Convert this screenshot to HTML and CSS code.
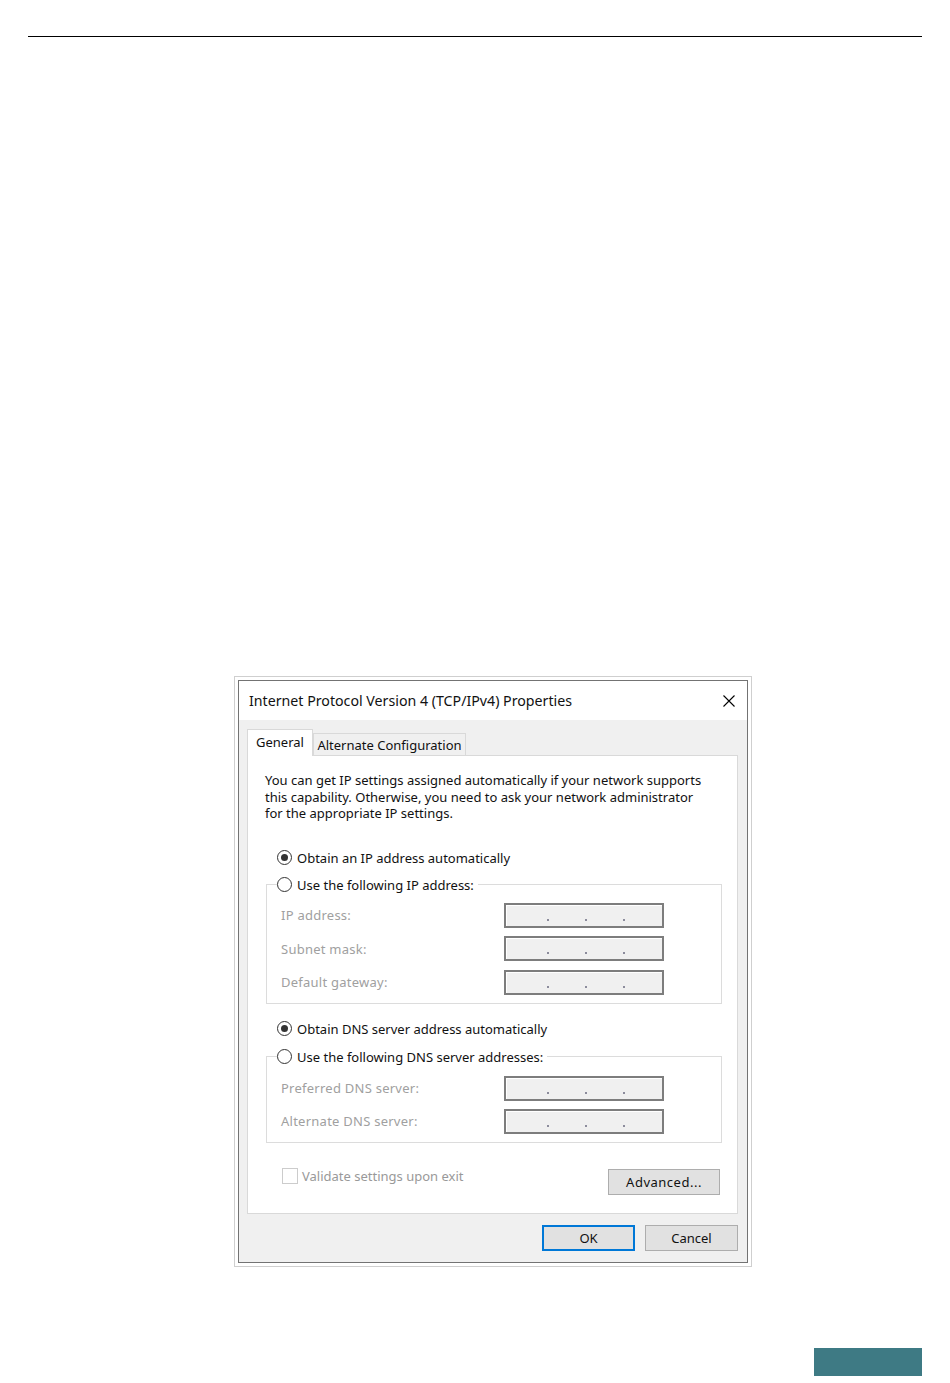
FILE: index.html
```html
<!DOCTYPE html>
<html lang="en">
<head>
<meta charset="utf-8">
<title>TCP/IPv4 Properties</title>
<link rel="stylesheet" href="styles.css">
</head>
<body>
<div class="rule"></div>
<div class="figure">
  <div class="frame">
    <div class="win">
      <div class="titlebar">
        <span class="title">Internet Protocol Version 4 (TCP/IPv4) Properties</span>
        <svg class="close" width="12" height="12" viewBox="0 0 12 12"><path d="M0.5 0.5 L11.5 11.5 M11.5 0.5 L0.5 11.5" stroke="#000" stroke-width="1.1" fill="none"/></svg>
      </div>
      <div class="body">
        <div class="tabs">
          <div class="tab active">General</div>
          <div class="tab">Alternate Configuration</div>
        </div>
        <div class="panel">
          <p class="intro">You can get IP settings assigned automatically if your network supports<br>this capability. Otherwise, you need to ask your network administrator<br>for the appropriate IP settings.</p>
          <div class="opt first"><span class="radio on"></span>Obtain an IP address automatically</div>
          <fieldset class="group">
            <legend class="opt"><span class="radio"></span>Use the following IP address:</legend>
            <div class="row"><span class="lbl">IP address:</span><span class="ipfield"><i></i><i></i><i></i></span></div>
            <div class="row"><span class="lbl">Subnet mask:</span><span class="ipfield"><i></i><i></i><i></i></span></div>
            <div class="row"><span class="lbl">Default gateway:</span><span class="ipfield"><i></i><i></i><i></i></span></div>
          </fieldset>
          <div class="opt second"><span class="radio on"></span>Obtain DNS server address automatically</div>
          <fieldset class="group dns">
            <legend class="opt"><span class="radio"></span>Use the following DNS server addresses:</legend>
            <div class="row"><span class="lbl">Preferred DNS server:</span><span class="ipfield"><i></i><i></i><i></i></span></div>
            <div class="row"><span class="lbl">Alternate DNS server:</span><span class="ipfield"><i></i><i></i><i></i></span></div>
          </fieldset>
          <div class="bottomrow">
            <div class="check"><span class="box"></span>Validate settings upon exit</div>
            <div class="btn adv">Advanced...</div>
          </div>
        </div>
        <div class="actions">
          <div class="btn ok">OK</div>
          <div class="btn">Cancel</div>
        </div>
      </div>
    </div>
  </div>
</div>
<div class="foot"><div class="tealbar"></div></div>
</body>
</html>
```
FILE: styles.css
```css
* { box-sizing: border-box; }
html, body { margin: 0; padding: 0; background: #fff; }
body {
  font-family: "Noto Sans", "Open Sans", sans-serif;
  font-size: 13px;
  color: #000;
  width: 950px;
  height: 1383px;
  overflow: hidden;
}
.rule {
  margin: 36px 28px 0;
  border-top: 1px solid #000;
  height: 0;
}
.figure {
  margin: 639px 0 0 234px;
  width: 518px;
}
.frame {
  border: 1px solid #cfcfcf;
  padding: 3px;
  background: #fff;
}
.win {
  border: 1px solid #737373;
  background: #fff;
}
.titlebar {
  height: 39px;
  display: flex;
  align-items: center;
  justify-content: space-between;
  padding: 0 12px 0 10px;
  background: #fff;
}
.title { font-size: 14.2px; color: #111; }
.close { display: block; }
.body {
  background: #f0f0f0;
  height: 542px;
  padding: 9px 9px 0 8px;
}
.tabs {
  display: flex;
  align-items: flex-end;
  height: 27px;
  margin-bottom: -1px;
  position: relative;
  z-index: 1;
}
.tab {
  height: 22px;
  width: 153px;
  border: 1px solid #d9d9d9;
  border-bottom: none;
  background: #f0f0f0;
  margin-bottom: 1px;
  display: flex;
  align-items: center;
  justify-content: center;
  color: #111;
}
.tab.active {
  height: 27px;
  width: 66px;
  background: #fff;
  margin-bottom: 0;
  padding-bottom: 2px;
}
.panel {
  width: 491px;
  height: 459px;
  border: 1px solid #d9d9d9;
  background: #fff;
  padding: 16px 15px 0 17px;
}
.intro {
  margin: 0;
  line-height: 16.5px;
  color: #111;
}
.opt {
  display: flex;
  align-items: center;
  height: 16px;
  line-height: 16px;
  color: #111;
}
.opt.first { margin-top: 28px; padding-left: 12px; }
.opt.second { margin-top: 17px; padding-left: 12px; }
.radio {
  width: 15px;
  height: 15px;
  border: 1px solid #333;
  border-radius: 50%;
  margin-right: 5px;
  display: flex;
  align-items: center;
  justify-content: center;
  background: #fff;
  flex: none;
}
.radio.on::after {
  content: "";
  width: 7px;
  height: 7px;
  border-radius: 50%;
  background: #333;
}
.group {
  margin: 11px 0 0 1px;
  padding: 10px 0 8px 0;
  border: 1px solid #dcdcdc;
  min-width: 0;
}
.group.dns { margin-top: 12px; padding-top: 11px; }
.group legend {
  margin-left: 10px;
  padding: 0 4px 0 0;
}
.row {
  display: flex;
  align-items: center;
  height: 25px;
  padding-left: 14px;
}
.row + .row { margin-top: 8.5px; }
.group.dns .row + .row { margin-top: 8px; }
.lbl {
  width: 223px;
  color: #a0a0a0;
  letter-spacing: 0.25px;
}
.ipfield {
  width: 160px;
  height: 25px;
  border: 2px solid #7d7d7d;
  background: #f0f0f0;
  box-shadow: inset 1px 1px 0 #fff;
  display: flex;
  padding: 14px 0 0 41px;
  gap: 36px;
}
.ipfield i {
  width: 2px;
  height: 2px;
  background: #8c8c9c;
}
.bottomrow {
  margin-top: 25px;
  display: flex;
  justify-content: space-between;
  align-items: flex-start;
  padding-right: 2px;
}
.check {
  display: flex;
  align-items: center;
  height: 16px;
  padding-left: 17px;
  color: #999;
}
.box {
  width: 16px;
  height: 16px;
  border: 1px solid #cccccc;
  background: #fff;
  margin-right: 4px;
}
.btn {
  height: 26px;
  border: 1px solid #adadad;
  background: #e1e1e1;
  display: flex;
  align-items: center;
  justify-content: center;
  color: #111;
}
.adv { width: 112px; margin-top: 1px; letter-spacing: 0.5px; }
.actions {
  display: flex;
  justify-content: flex-end;
  gap: 10px;
  margin-top: 11px;
}
.actions .btn { width: 93px; }
.btn.ok { border: 2px solid #0078d7; }
.foot {
  display: flex;
  justify-content: flex-end;
  padding-right: 28px;
  margin-top: 81px;
}
.tealbar {
  width: 108px;
  height: 28px;
  background: #3e7a84;
}
```
